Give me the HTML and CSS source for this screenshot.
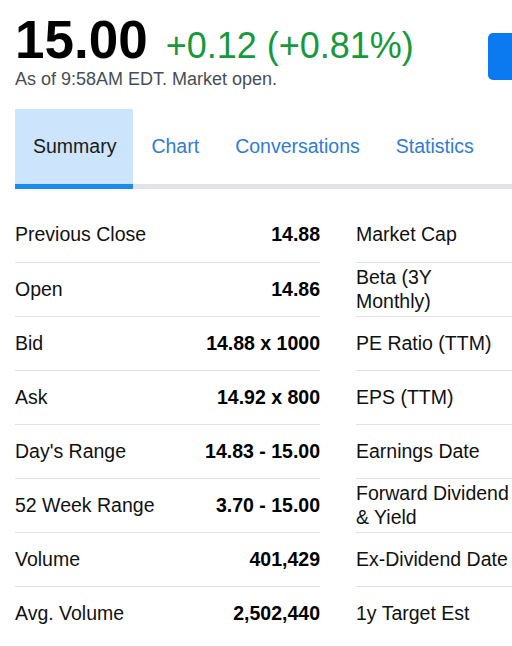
FILE: index.html
```html
<!DOCTYPE html>
<html lang="en">
<head>
<meta charset="utf-8">
<title>Quote Summary</title>
<link rel="stylesheet" href="styles.css">
</head>
<body>
<div class="page">
  <header class="quote-header">
    <div class="quote">
      <div class="price-line">
        <span class="price">15.00</span>
        <span class="change">+0.12 (+0.81%)</span>
      </div>
      <div class="as-of">As of 9:58AM EDT. Market open.</div>
    </div>
    <button class="follow" type="button" aria-label="Follow"></button>
  </header>

  <nav class="tabs">
    <a class="tab active" href="#">Summary</a>
    <a class="tab" href="#">Chart</a>
    <a class="tab" href="#">Conversations</a>
    <a class="tab" href="#">Statistics</a>
  </nav>

  <section class="stats">
    <table class="stats-table left">
      <tbody>
        <tr><td class="label">Previous Close</td><td class="value">14.88</td></tr>
        <tr><td class="label">Open</td><td class="value">14.86</td></tr>
        <tr><td class="label">Bid</td><td class="value">14.88 x 1000</td></tr>
        <tr><td class="label">Ask</td><td class="value">14.92 x 800</td></tr>
        <tr><td class="label">Day's Range</td><td class="value">14.83 - 15.00</td></tr>
        <tr><td class="label">52 Week Range</td><td class="value">3.70 - 15.00</td></tr>
        <tr><td class="label">Volume</td><td class="value">401,429</td></tr>
        <tr><td class="label">Avg. Volume</td><td class="value">2,502,440</td></tr>
      </tbody>
    </table>
    <table class="stats-table right">
      <tbody>
        <tr><td class="label">Market Cap</td></tr>
        <tr><td class="label">Beta (3Y<br>Monthly)</td></tr>
        <tr><td class="label">PE Ratio (TTM)</td></tr>
        <tr><td class="label">EPS (TTM)</td></tr>
        <tr><td class="label">Earnings Date</td></tr>
        <tr><td class="label">Forward Dividend<br>&amp; Yield</td></tr>
        <tr><td class="label">Ex-Dividend Date</td></tr>
        <tr><td class="label">1y Target Est</td></tr>
      </tbody>
    </table>
  </section>
</div>
</body>
</html>
```

FILE: styles.css
```css
html, body {
  margin: 0;
  padding: 0;
  background: #ffffff;
}

body {
  font-family: "Liberation Sans", Arial, Helvetica, sans-serif;
  color: #000000;
}

.page {
  width: 512px;
  padding-left: 15px;
  box-sizing: border-box;
  overflow: hidden;
}

/* Header */
.quote-header {
  display: grid;
  grid-template-columns: 473px 24px;
  padding-top: 14px;
}

.price-line {
  display: flex;
  align-items: baseline;
  line-height: 52px;
  height: 52px;
  white-space: nowrap;
}

.price {
  font-size: 53px;
  font-weight: bold;
  color: #000000;
}

.change {
  font-size: 36px;
  color: #16993d;
  margin-left: 18px;
}

.as-of {
  margin-top: 2px;
  font-size: 18px;
  line-height: 22px;
  color: #464e56;
}

.follow {
  margin-top: 19px;
  width: 24px;
  height: 47px;
  border: none;
  border-radius: 5px 0 0 5px;
  background: #0b7af0;
  padding: 0;
}

/* Tabs */
.tabs {
  display: flex;
  margin-top: 19px;
  border-bottom: 5px solid #e0e3e8;
}

.tab {
  display: flex;
  align-items: center;
  box-sizing: border-box;
  height: 75px;
  padding: 0 18px 2px;
  font-size: 19.5px;
  line-height: 22px;
  color: #2f7bd8;
  text-decoration: none;
  white-space: nowrap;
}

.tab.active {
  height: 80px;
  padding: 0 17px 2px 18px;
  background: #cce4fc;
  color: #1a1a1a;
  border-bottom: 5px solid #1b8cf0;
  margin-bottom: -5px;
}

/* Stats */
.stats {
  display: flex;
  gap: 36px;
  margin-top: 19px;
}

.stats-table {
  border-collapse: collapse;
  font-size: 19.5px;
}

.stats-table.left {
  width: 305px;
  flex: none;
}

.stats-table.right {
  flex: 1;
}

.stats-table td {
  box-sizing: border-box;
  height: 54px;
  padding: 0 0 1px;
  vertical-align: middle;
  line-height: 24px;
  border-bottom: 1px solid #e2e2e2;
}

.stats-table tr:last-child td {
  border-bottom: none;
}

.stats-table .label {
  text-align: left;
  color: #111111;
  white-space: nowrap;
}

.stats-table .value {
  text-align: right;
  font-weight: bold;
  color: #000000;
  white-space: nowrap;
}
```
